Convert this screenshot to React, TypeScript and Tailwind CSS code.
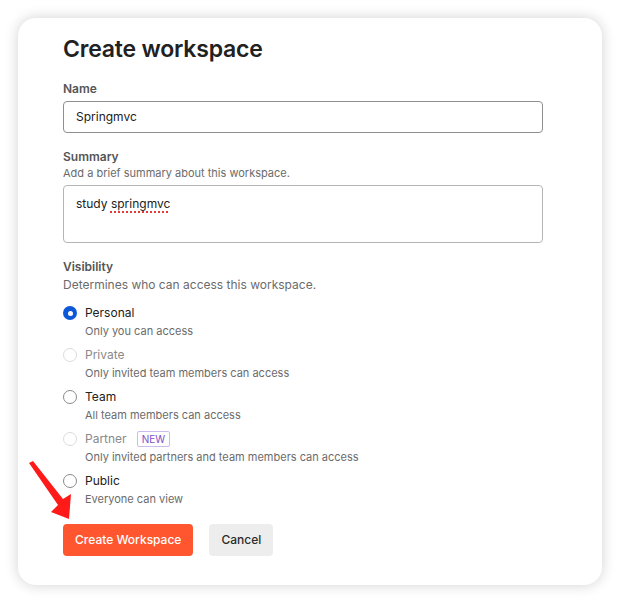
import React from 'react';

interface VisibilityOption {
  label: string;
  hint: string;
  checked?: boolean;
  disabled?: boolean;
  badge?: string;
}

const OPTIONS: VisibilityOption[] = [
  { label: 'Personal', hint: 'Only you can access', checked: true },
  { label: 'Private', hint: 'Only invited team members can access', disabled: true },
  { label: 'Team', hint: 'All team members can access' },
  { label: 'Partner', hint: 'Only invited partners and team members can access', disabled: true, badge: 'NEW' },
  { label: 'Public', hint: 'Everyone can view' },
];

function Radio({ checked, disabled }: { checked?: boolean; disabled?: boolean }) {
  if (checked) {
    return (
      <span className="flex size-[14px] shrink-0 items-center justify-center rounded-full bg-[#0c58d6]">
        <span className="size-[5px] rounded-full bg-white" />
      </span>
    );
  }
  return (
    <span
      className={
        disabled
          ? 'size-[14px] shrink-0 rounded-full border border-[#dcdcdc] bg-white'
          : 'size-[14px] shrink-0 rounded-full border border-[#8a8a8a] bg-white'
      }
    />
  );
}

// annotation arrow drawn over the screenshot
function RedArrow() {
  return (
    <svg className="pointer-events-none absolute left-0 top-0" width="620" height="604" aria-hidden>
      <polygon points="29,463 33,461 63,499 71,494 69,519 51,512 58,505" fill="#ff1a1a" />
    </svg>
  );
}

export default function App() {
  return (
    <div
      className="relative h-[604px] w-[620px] overflow-hidden bg-white"
      style={{ fontFamily: 'Inter, "Noto Sans", sans-serif' }}
    >
      <div className="pt-[18px] pl-[18px]">
        <div className="h-[567px] w-[584px] rounded-[18px] bg-white pl-[45px] pr-[59px] pt-[15px] shadow-[0_0_14px_rgba(0,0,0,0.18)]">
          <h1 className="text-[23px] font-semibold leading-[32px] tracking-[-0.2px] text-[#212121]">
            Create workspace
          </h1>

          <div className="mt-[16px] text-[12px] font-semibold leading-[16px] text-[#555]">Name</div>
          <div className="mt-[4px] flex h-[32px] w-[480px] items-center rounded-[4px] border border-[#8f8f8f] px-[12px] text-[12px] text-[#212121]">
            Springmvc
          </div>

          <div className="mt-[16px] text-[12px] font-semibold leading-[16px] text-[#555]">Summary</div>
          <div className="text-[11px] leading-[16px] text-[#6b6b6b]">Add a brief summary about this workspace.</div>
          <div className="mt-[4px] h-[58px] w-[480px] rounded-[4px] border border-[#b5b5b5] px-[12px] pt-[10px] text-[12px] leading-[16px] text-[#212121]">
            study{' '}
            <span className="underline decoration-[#e53935] decoration-dotted decoration-[1.5px] underline-offset-[3px]">
              springmvc
            </span>
          </div>

          <div className="mt-[16px] text-[12px] font-semibold leading-[16px] text-[#555]">Visibility</div>
          <div className="text-[12px] leading-[20px] text-[#6b6b6b]">Determines who can access this workspace.</div>

          <div className="mt-[8px] flex flex-col gap-[6px]">
            {OPTIONS.map((opt) => (
              <div key={opt.label} className="flex flex-col">
                <div className="flex h-[20px] items-center gap-[8px]">
                  <Radio checked={opt.checked} disabled={opt.disabled} />
                  <span className={opt.disabled ? 'text-[12px] text-[#8a8a8a]' : 'text-[12px] text-[#212121]'}>
                    {opt.label}
                  </span>
                  {opt.badge ? (
                    <span className="ml-[2px] rounded-[2px] border border-[#cbbcf0] px-[4px] text-[10px] leading-[14px] text-[#7a4fcb]">
                      {opt.badge}
                    </span>
                  ) : null}
                </div>
                <div className="pl-[22px] text-[11px] leading-[16px] text-[#6b6b6b]">{opt.hint}</div>
              </div>
            ))}
          </div>

          <div className="mt-[17px] flex gap-[16px]">
            <button className="h-[32px] rounded-[4px] bg-[#ff5630] px-[12px] text-[12px] font-medium text-white">
              Create Workspace
            </button>
            <button className="h-[32px] rounded-[4px] bg-[#ededed] px-[12px] text-[12px] font-medium text-[#2b2b2b]">
              Cancel
            </button>
          </div>
        </div>
      </div>
      <RedArrow />
    </div>
  );
}
